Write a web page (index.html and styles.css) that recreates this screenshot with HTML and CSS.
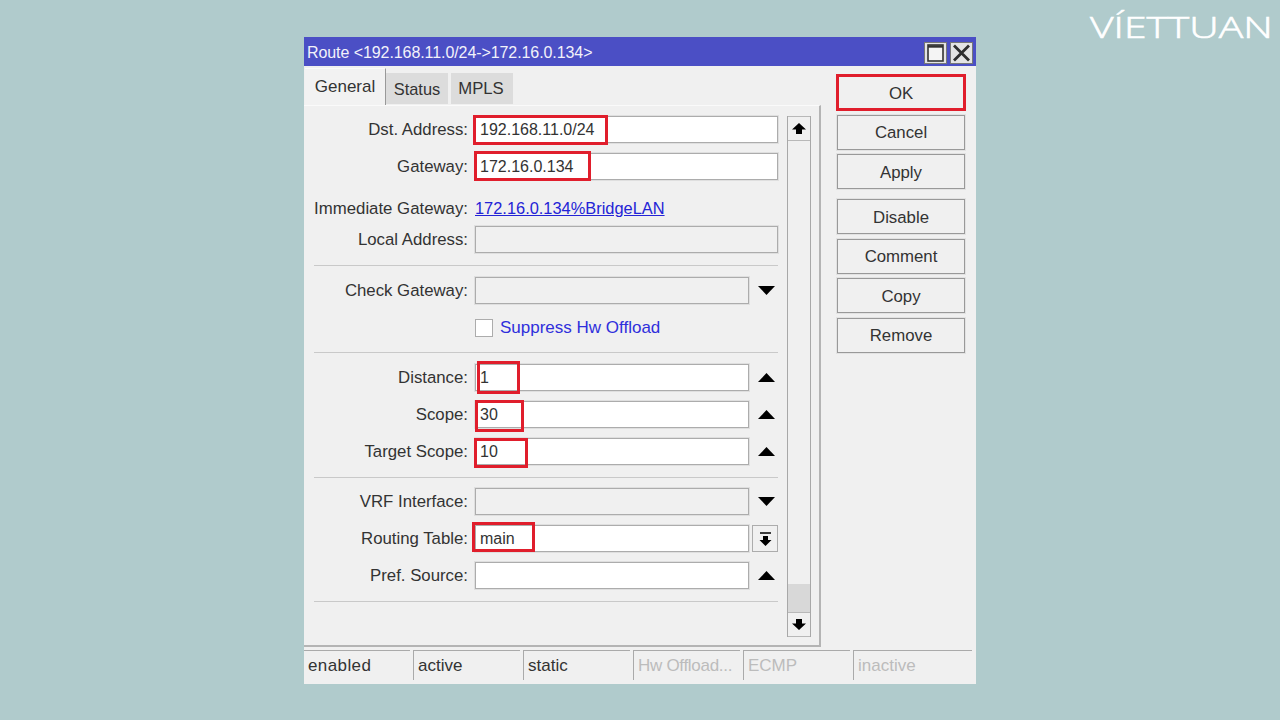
FILE: index.html
```html
<!DOCTYPE html>
<html lang="en">
<head>
<meta charset="utf-8">
<title>Route</title>
<link rel="stylesheet" href="styles.css">
</head>
<body>
<div class="logo">VÍETTUAN</div>
<div class="window">
  <header class="titlebar">
    <span class="title">Route &lt;192.168.11.0/24-&gt;172.16.0.134&gt;</span>
    <div class="winbtns">
      <span class="winbtn"><svg width="17" height="18" viewBox="0 0 17 18"><rect x="1" y="1" width="15" height="16" fill="#f4f4f4" stroke="#333" stroke-width="1.600"/><path d="M1 2.500h15" stroke="#333" stroke-width="2.400"/></svg></span>
      <span class="winbtn"><svg width="19" height="18" viewBox="0 0 19 18"><path d="M2 1.500l15 15M17 1.500l-15 15" stroke="#2e2e2e" stroke-width="2.800" fill="none"/></svg></span>
    </div>
  </header>
  <div class="body">
    <div class="left">
      <nav class="tabs">
        <div class="tab active">General</div>
        <div class="tab t-status">Status</div>
        <div class="tab t-mpls">MPLS</div>
      </nav>
      <section class="panel">
        <div class="form">
          <div class="row first">
            <label class="label">Dst. Address:</label>
            <div class="field"><span class="mark m-dst"></span>192.168.11.0/24</div>
          </div>
          <div class="row">
            <label class="label">Gateway:</label>
            <div class="field"><span class="mark m-gw"></span>172.16.0.134</div>
          </div>
          <div class="row imm">
            <label class="label">Immediate Gateway:</label>
            <a class="link">172.16.0.134%BridgeLAN</a>
          </div>
          <div class="row local">
            <label class="label">Local Address:</label>
            <div class="field off"></div>
          </div>
          <hr class="divider">
          <div class="row tight">
            <label class="label">Check Gateway:</label>
            <div class="field off"></div>
            <span class="drop"><svg width="17" height="9" viewBox="0 0 17 9"><path d="M0 0h17L8.500 9z"/></svg></span>
          </div>
          <div class="row">
            <span class="label"></span>
            <span class="check"></span>
            <span class="checktext">Suppress Hw Offload</span>
          </div>
          <hr class="divider d-a">
          <div class="row tight">
            <label class="label">Distance:</label>
            <div class="field"><span class="mark m-dist"></span>1</div>
            <span class="drop"><svg width="17" height="9" viewBox="0 0 17 9"><path d="M0 9h17L8.500 0z"/></svg></span>
          </div>
          <div class="row">
            <label class="label">Scope:</label>
            <div class="field"><span class="mark m-scope"></span>30</div>
            <span class="drop"><svg width="17" height="9" viewBox="0 0 17 9"><path d="M0 9h17L8.500 0z"/></svg></span>
          </div>
          <div class="row">
            <label class="label">Target Scope:</label>
            <div class="field"><span class="mark m-target"></span>10</div>
            <span class="drop"><svg width="17" height="9" viewBox="0 0 17 9"><path d="M0 9h17L8.500 0z"/></svg></span>
          </div>
          <hr class="divider d-b">
          <div class="row tight">
            <label class="label">VRF Interface:</label>
            <div class="field off"></div>
            <span class="drop"><svg width="17" height="9" viewBox="0 0 17 9"><path d="M0 0h17L8.500 9z"/></svg></span>
          </div>
          <div class="row">
            <label class="label">Routing Table:</label>
            <div class="field"><span class="mark m-table"></span>main</div>
            <span class="droptable"><svg width="13" height="14" viewBox="0 0 13 14"><path d="M1 1h11" stroke="#000" stroke-width="1.500"/><path d="M4 4h5v4h3.500L6.500 14 .5 8H4z"/></svg></span>
          </div>
          <div class="row">
            <label class="label">Pref. Source:</label>
            <div class="field"></div>
            <span class="drop"><svg width="17" height="9" viewBox="0 0 17 9"><path d="M0 9h17L8.500 0z"/></svg></span>
          </div>
          <hr class="divider">
        </div>
        <div class="scrollbar">
          <div class="sbtn"><svg width="14" height="11" viewBox="0 0 14 11"><path d="M7 0l7 6.500H10V11H4V6.500H0z"/></svg></div>
          <div class="track"></div>
          <div class="thumb"></div>
          <div class="sbtn"><svg width="14" height="11" viewBox="0 0 14 11"><path d="M7 11l7-6.500H10V0H4v4.500H0z"/></svg></div>
        </div>
      </section>
    </div>
    <aside class="actions">
      <button class="btn ok">OK<span class="mark m-ok"></span></button>
      <button class="btn">Cancel</button>
      <button class="btn">Apply</button>
      <button class="btn sep">Disable</button>
      <button class="btn">Comment</button>
      <button class="btn">Copy</button>
      <button class="btn">Remove</button>
    </aside>
  </div>
  <footer class="status">
    <div class="cell nob">enabled</div>
    <div class="cell">active</div>
    <div class="cell">static</div>
    <div class="cell dim hw">Hw Offload...</div>
    <div class="cell dim">ECMP</div>
    <div class="cell dim last">inactive</div>
  </footer>
</div>
</body>
</html>
```
FILE: styles.css
```css
* { box-sizing: border-box; }
html, body { margin: 0; height: 100%; }
body {
  background: #b0cbcc;
  font-family: "Liberation Sans", Arial, sans-serif;
  font-size: 16px;
  color: #333;
  overflow: hidden;
  padding: 37px 0 0 304px;
  position: relative;
}
.logo {
  position: absolute;
  left: 1090px;
  top: 5px;
  font-family: "Open Sans", sans-serif;
  font-weight: 300;
  font-size: 29.500px;
  line-height: 44px;
  color: #fff;
  -webkit-text-stroke: 0.6px #fff;
  white-space: nowrap;
  transform-origin: left center;
  transform: scaleX(1.385);
}
.window {
  width: 672px;
  height: 647px;
  background: #f0f0f0;
  display: flex;
  flex-direction: column;
}
.titlebar {
  height: 29px;
  background: #4b4fc5;
  display: flex;
  align-items: center;
  justify-content: space-between;
  padding: 2px 3px 0 3px;
  color: #f2f2fa;
}
.title { letter-spacing: -0.08px; }
.winbtns { display: flex; gap: 3px; }
.winbtn {
  width: 23px;
  height: 22px;
  background: #e4e4e4;
  border: 1px solid #777;
  display: flex;
  align-items: center;
  justify-content: center;
}
.body { display: flex; flex: 1; min-height: 0; }
.left { width: 517px; display: flex; flex-direction: column; }
.tabs { display: flex; height: 39px; align-items: flex-end; padding-left: 1px; }
.tab {
  height: 31px;
  width: 62px;
  margin-bottom: 1px;
  margin-right: 3px;
  padding-top: 1px;
  background: #dcdcdc;
  display: flex;
  align-items: center;
  justify-content: center;
}
.t-status { font-size: 16.400px; }
.t-mpls { font-size: 16.700px; padding-right: 2px; }
.tab.active {
  height: 37px;
  width: 81px;
  margin: 0;
  padding: 0 0 1px;
  font-size: 17px;
  background: #f2f2f2;
  border-right: 1px solid #999;
  border-top: 1px solid #fafafa;
}
.panel {
  flex: 1;
  display: flex;
  gap: 9px;
  padding: 10px 8px 8px 10px;
  border-right: 2px solid #b4b4b4;
  border-bottom: 2px solid #b4b4b4;
  border-top: 1px solid #fafafa;
  min-height: 0;
}
.form { width: 464px; flex: none; }
.row {
  display: flex;
  align-items: center;
  height: 27px;
  margin-top: 10px;
}
.row.first { margin-top: 0; }
.row.tight { margin-top: 0; }
.row.imm { margin-top: 15px; }
.row.local { margin-top: 4px; }
.label {
  width: 154px;
  margin-right: 7px;
  text-align: right;
  white-space: nowrap;
  flex: none;
  font-size: 16.800px;
}
.field {
  flex: 1;
  height: 27px;
  background: #fff;
  border: 1px solid #acacac;
  box-shadow: 0 0 0 1px rgba(170, 170, 170, 0.25);
  line-height: 25px;
  padding-left: 4px;
  position: relative;
}
.field.off { background: #f0f0f0; }
.link { color: #2323d6; text-decoration: underline; font-size: 16.400px; }
.drop {
  width: 29px;
  flex: none;
  display: flex;
  justify-content: center;
  padding-left: 5px;
}
.drop svg, .droptable svg, .sbtn svg { display: block; fill: #000; }
.droptable {
  width: 26px;
  height: 27px;
  margin-left: 3px;
  flex: none;
  border: 1px solid #acacac;
  display: flex;
  align-items: center;
  justify-content: center;
}
.check {
  width: 18px;
  height: 18px;
  background: #fff;
  border: 1px solid #acacac;
  flex: none;
}
.checktext { margin-left: 7px; color: #2f2fdc; font-size: 17px; }
.divider {
  border: 0;
  height: 1px;
  background: #c9c9c9;
  margin: 12px 0 11px;
}
.divider.d-a { margin-top: 11px; }
.divider.d-b { margin-bottom: 10px; }
.scrollbar {
  width: 24px;
  flex: none;
  display: flex;
  flex-direction: column;
  border-left: 1px solid #a8a8a8;
  border-right: 1px solid #a8a8a8;
}
.sbtn {
  height: 25px;
  flex: none;
  border: 1px solid #b8b8b8;
  border-left: 0;
  border-right: 0;
  display: flex;
  align-items: center;
  justify-content: center;
}
.track { flex: 1; }
.thumb { height: 28px; flex: none; background: #d8d8d8; }
.actions {
  flex: 1;
  display: flex;
  flex-direction: column;
  gap: 4.500px;
  padding: 9px 11px 0 16px;
}
.btn {
  height: 35px;
  padding: 2px 0 0;
  flex: none;
  background: #f0f0f0;
  border: 1px solid #999;
  box-shadow: 0 0 0 1px rgba(170, 170, 170, 0.2);
  font: inherit;
  font-size: 16.800px;
  color: inherit;
  position: relative;
}
.btn.sep { margin-top: 5.500px; }
.status {
  height: 37px;
  display: flex;
  gap: 3px;
  padding: 3px 4px 4px 0;
  font-size: 17px;
}
.cell {
  width: 107px;
  border-top: 1px solid #aaa;
  border-left: 1px solid #aaa;
  padding: 4px 0 0 4px;
  line-height: 22px;
}
.cell.nob { width: 106px; border-left: 0; letter-spacing: 0.4px; }
.cell.last { width: 119px; }
.cell.dim { color: #bcbcbc; }
.cell.hw { letter-spacing: -0.3px; }
.mark {
  position: absolute;
  border: 3px solid #e01e2c;
  pointer-events: none;
}
.m-dst { left: -3px; top: -2px; width: 135px; height: 30px; }
.m-gw { left: -2px; top: -3px; width: 117px; height: 30px; }
.m-dist { left: 1px; top: -4px; width: 43px; height: 33px; }
.m-scope { left: -1px; top: -2px; width: 49px; height: 32px; }
.m-target { left: -2px; top: -1px; width: 54px; height: 30px; }
.m-table { left: -4px; top: -4px; width: 63px; height: 30px; }
.m-ok { left: -2px; top: -2px; width: 130px; height: 37px; }
```
